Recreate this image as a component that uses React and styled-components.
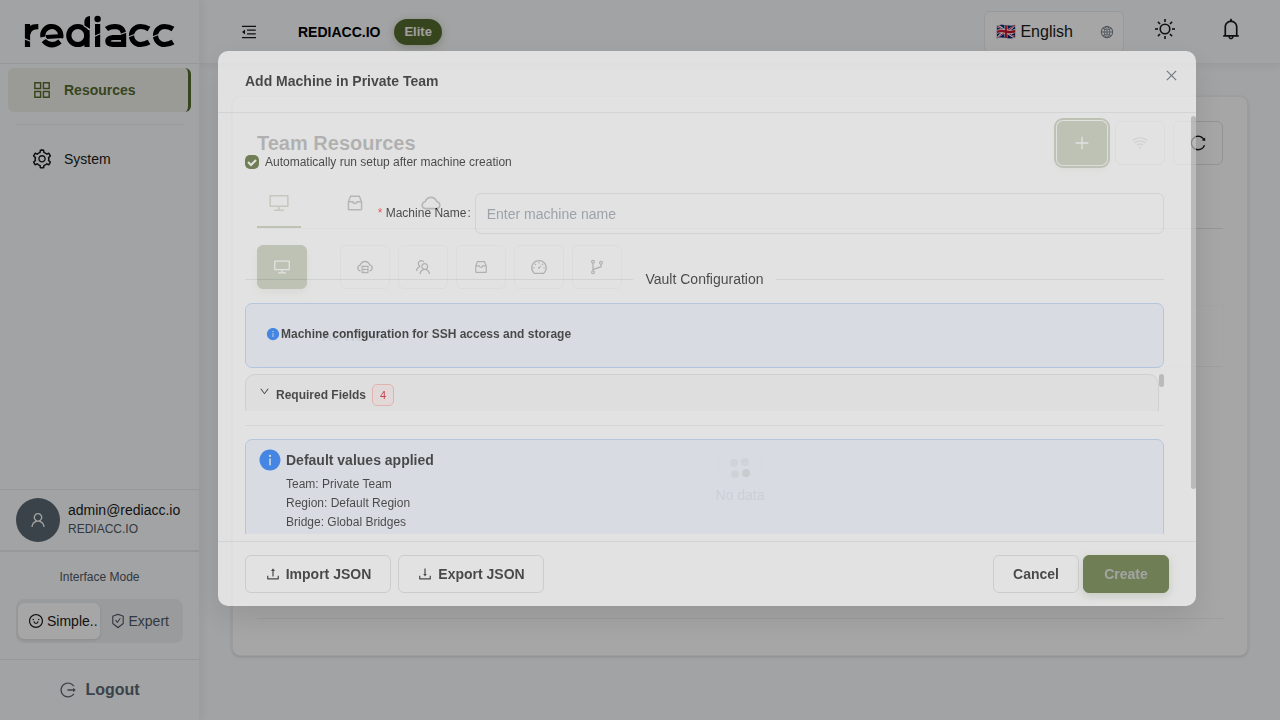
import React from 'react';
import styled, { createGlobalStyle, css } from 'styled-components';
import {
  AiOutlineAppstore, AiOutlineSetting, AiOutlineUser, AiOutlineSmile, AiOutlineSafetyCertificate,
  AiOutlineLogout, AiOutlineMenuFold, AiOutlineInbox, AiOutlineCloud, AiOutlineDesktop,
  AiOutlineCloudServer, AiOutlineTeam, AiOutlineDashboard, AiOutlineBranches, AiOutlineWifi,
  AiOutlineReload, AiOutlinePlus, AiOutlineUpload, AiOutlineDownload, AiOutlineDown,
  AiFillInfoCircle, AiOutlineClose, AiOutlineBell, AiOutlineGlobal,
} from 'react-icons/ai';

const Global = createGlobalStyle`
  *, *::before, *::after { box-sizing: border-box; }
  body {
    margin: 0;
    overflow: hidden;
    font-family: "Liberation Sans", Arial, sans-serif;
    font-size: 14px;
    color: #1a1a1a;
    background: #f9fafc;
  }
  button, input, select { font: inherit; color: inherit; margin: 0; }
  button { cursor: pointer; }
  h1, h2, h3, p, ul { margin: 0; padding: 0; }
  svg { display: block; flex: none; }
`;

const Page = styled.div`
  display: flex;
  min-height: 100vh;
`;

/* Sidebar */
const Sidebar = styled.aside`
  display: flex;
  flex-direction: column;
  flex: none;
  width: 200px;
  border-right: 1px solid #f0f0f2;
  box-shadow: 2px 0 8px rgba(0, 0, 0, 0.06);
  background: #f9fafc;
  z-index: 1;
`;

const Brand = styled.div`
  height: 64px;
  padding: 13px 24px;
  border-bottom: 1px solid #e8eaec;
`;

const Menu = styled.nav`
  display: flex;
  flex-direction: column;
  padding: 4px 8px;
`;

const MenuLink = styled.a`
  display: flex;
  align-items: center;
  gap: 11px;
  height: 44px;
  padding-left: 23px;
  border-radius: 6px;
  color: #1a1a1a;
  text-decoration: none;
  ${(p) => p.$active && css`
    background: #edefe9;
    color: #556b2f;
    font-weight: 600;
    border-right: 3px solid #556b2f;
  `}
`;

const MenuDivider = styled.hr`
  width: 168px;
  margin: 12px 8px;
  border: 0;
  border-top: 1px solid #eceef0;
`;

const UserPanel = styled.div`
  display: flex;
  align-items: center;
  gap: 8px;
  height: 61px;
  margin-top: auto;
  padding: 0 16px 1px;
  border-top: 1px solid #e8eaec;
`;

const Avatar = styled.div`
  display: flex;
  align-items: center;
  justify-content: center;
  flex: none;
  width: 44px;
  height: 44px;
  border-radius: 50%;
  background: #5a6872;
  color: #fafafa;
`;

const UserName = styled.div`
  line-height: 18px;
`;

const UserOrg = styled.div`
  font-size: 12px;
  line-height: 20px;
  color: #4d5863;
`;

const ModePanel = styled.fieldset`
  display: flex;
  flex-direction: column;
  gap: 12px;
  min-width: 0;
  margin: 0;
  padding: 15px 16px 16px;
  border: 0;
  border-top: 2px solid #e8eaec;
`;

const ModeTitle = styled.div`
  font-size: 12px;
  line-height: 20px;
  text-align: center;
  color: #4d5863;
`;

const Segmented = styled.div`
  display: flex;
  height: 44px;
  padding: 4px 2px;
  border-radius: 8px;
  background: #eceef0;
`;

const Segment = styled.label`
  display: flex;
  align-items: center;
  flex: 1;
  gap: 3px;
  min-width: 0;
  padding-left: 10px;
  border-radius: 6px;
  color: #4d5863;
  white-space: nowrap;
  &:has(input:checked) {
    background: #ffffff;
    color: #1a1a1a;
    box-shadow: 0 1px 3px rgba(0, 0, 0, 0.1);
  }
`;

const HiddenRadio = styled.input`
  position: absolute;
  opacity: 0;
  pointer-events: none;
`;

const Logout = styled.button`
  display: flex;
  align-items: center;
  justify-content: center;
  gap: 8px;
  height: 61px;
  border: 0;
  border-top: 1px solid #e8eaec;
  background: none;
  color: #5a6872;
  font-size: 16px;
  font-weight: 600;
`;

/* Main area */
const Main = styled.div`
  display: flex;
  flex-direction: column;
  flex: 1;
  min-width: 0;
`;

const Header = styled.header`
  display: flex;
  align-items: center;
  height: 64px;
  padding: 0 37px 0 40px;
  border-bottom: 1px solid #f0f0f2;
  box-shadow: 0 2px 8px rgba(0, 0, 0, 0.06);
`;

const BareButton = styled.button`
  display: flex;
  padding: 0;
  border: 0;
  background: none;
`;

const OrgName = styled.strong`
  margin-left: 40px;
  color: #000000;
`;

const PlanTag = styled.span`
  margin-left: 14px;
  padding: 0 10px;
  border-radius: 13px;
  background: #556b2f;
  box-shadow: 0 2px 8px rgba(85, 107, 47, 0.3);
  color: #f5f5f5;
  font-size: 13px;
  font-weight: 600;
  line-height: 26px;
`;

const HeaderTools = styled.div`
  display: flex;
  align-items: center;
  gap: 30px;
  margin-left: auto;
`;

const HeaderIcons = styled.div`
  display: flex;
  align-items: center;
  gap: 43px;
  padding-bottom: 5px;
`;

const LanguageBox = styled.div`
  display: flex;
  align-items: center;
  justify-content: space-between;
  width: 140px;
  height: 42px;
  padding: 0 9px 0 11px;
  border: 1px solid #eaecee;
  border-radius: 6px;
  background: #ffffff;
  color: #7b8490;
`;

const LanguageSelect = styled.select`
  appearance: none;
  padding: 0;
  border: 0;
  background: none;
  color: #1a1a1a;
  font-size: 16px;
`;

const Content = styled.main`
  display: flex;
  flex-direction: column;
  padding: 32px;
`;

const Card = styled.section`
  display: flex;
  flex-direction: column;
  min-height: 560px;
  padding: 24px;
  border: 1px solid #f0f1f2;
  border-radius: 8px;
  background: #ffffff;
  box-shadow: 0 1px 3px rgba(0, 0, 0, 0.15);
`;

const CardHead = styled.div`
  display: flex;
  align-items: center;
  justify-content: space-between;
  height: 44px;
`;

const CardTitle = styled.h1`
  font-size: 20px;
  line-height: 28px;
  font-weight: 600;
`;

const ButtonRow = styled.div`
  display: flex;
  gap: 8px;
`;

const SquareButton = styled.button`
  display: flex;
  align-items: center;
  justify-content: center;
  width: 50px;
  height: 44px;
  padding: 0 0 1px;
  border: 1px solid #dfe2e6;
  border-radius: 6px;
  background: none;
  color: #1a1a1a;
  ${(p) => p.$primary && css`
    border-color: #556b2f;
    background: #556b2f;
    color: #ffffff;
    box-shadow: 0 4px 10px rgba(85, 107, 47, 0.25);
  `}
  ${(p) => p.$focused && css`
    outline: 2px solid #556b2f;
    outline-offset: 1px;
  `}
  ${(p) => p.$disabled && css`
    color: #b8b8b8;
  `}
`;

const TabBar = styled.div`
  display: flex;
  gap: 32px;
  height: 51px;
  margin-top: 13px;
  border-bottom: 1px solid #e2e5e8;
`;

const Tab = styled.button`
  display: flex;
  align-items: center;
  justify-content: center;
  width: 44px;
  padding: 1px 0 0;
  border: 0;
  border-bottom: 2px solid ${(p) => (p.$active ? '#556b2f' : 'transparent')};
  background: none;
  color: ${(p) => (p.$active ? '#7a8a55' : '#333333')};
`;

const ViewRow = styled.div`
  display: flex;
  gap: 8px;
  margin-top: 16px;
  & > :first-child { margin-right: 25px; }
`;

const TableHead = styled.div`
  margin-top: 16px;
  padding: 0 64px;
  border: 1px solid #fafafa;
  border-bottom-color: #f2f3f4;
  color: #c4c8cc;
  font-weight: 600;
  line-height: 60px;
`;

const Empty = styled.div`
  display: flex;
  flex-direction: column;
  align-items: center;
  gap: 9px;
  flex: 1;
  margin-bottom: 12px;
  padding-top: 74px;
  border-bottom: 1px solid #f0f1f2;
  color: #c8c8c8;
`;

/* Dialog */
const Mask = styled.div`
  position: fixed;
  inset: 0;
  z-index: 10;
  display: flex;
  align-items: flex-start;
  padding: 51px 84px 0 218px;
  background: rgba(0, 0, 0, 0.35);
`;

const Dialog = styled.div`
  display: flex;
  flex-direction: column;
  flex: 1;
  min-width: 0;
  border-radius: 10px;
  background: #ffffff;
  box-shadow: 0 12px 32px rgba(0, 0, 0, 0.16);
  opacity: 0.67;
`;

const DialogHead = styled.div`
  display: flex;
  justify-content: space-between;
  height: 62px;
  padding: 17px 17px 0 27px;
  border-bottom: 1px solid #e8eaec;
`;

const DialogTitle = styled.h2`
  font-size: 14px;
  line-height: 26px;
  font-weight: 600;
`;

const CloseButton = styled(BareButton)`
  align-self: flex-start;
  color: #5a6872;
`;

const DialogBody = styled.div`
  display: flex;
  gap: 27px;
  padding-left: 27px;
`;

const Form = styled.form`
  display: flex;
  flex-direction: column;
  flex: 1;
  min-width: 0;
  height: 421px;
  overflow: hidden;
  padding-top: 39px;
`;

const ScrollTrack = styled.div`
  width: 5px;
  padding-top: 3px;
`;

const ScrollThumb = styled.div`
  flex: none;
  width: 5px;
  height: ${(p) => p.$height}px;
  border-radius: 3px;
  background: #c4c4c4;
`;

const CheckLine = styled.label`
  display: flex;
  align-items: center;
  gap: 6px;
  height: 20px;
  margin-top: 3px;
  font-size: 12px;
`;

const CheckBox = styled.input`
  appearance: none;
  width: 14px;
  height: 14px;
  border-radius: 5px;
  background: #556b2f url("data:image/svg+xml,%3Csvg xmlns='http://www.w3.org/2000/svg' viewBox='0 0 14 14'%3E%3Cpath d='M3 7l3 3 5-5' fill='none' stroke='white' stroke-width='2'/%3E%3C/svg%3E");
`;

const Field = styled.div`
  display: grid;
  grid-template-columns: 1fr 3fr;
  align-items: center;
  height: 41px;
  margin-top: 24px;
`;

const FieldLabel = styled.label`
  padding: 0 4px 2px 0;
  font-size: 12px;
  text-align: right;
`;

const Required = styled.span`
  color: #ff3b30;
`;

const Colon = styled.span`
  margin-left: 1px;
`;

const TextInput = styled.input`
  width: 100%;
  height: 41px;
  padding: 0 11px;
  border: 1px solid #e4e7ea;
  border-radius: 6px;
  background: none;
  &::placeholder { color: #98a0ad; opacity: 1; }
`;

const SectionRule = styled.div`
  display: flex;
  align-items: center;
  gap: 12px;
  height: 24px;
  margin-top: 37px;
  &::before, &::after {
    content: "";
    flex: 1;
    height: 1px;
    background: #e4e7ea;
  }
`;

const Notice = styled.div`
  display: flex;
  align-items: center;
  gap: 1px;
  flex: none;
  height: 65px;
  margin-top: 16px;
  padding: 0 20px 3px;
  border: 1px solid #bcd4f8;
  border-radius: 7px;
  background: #f0f5ff;
  color: #1a1a1a;
  font-size: 12px;
  font-weight: 600;
  & > svg { color: #1677ff; }
`;

const FieldsPane = styled.div`
  display: flex;
  flex: none;
  height: 37px;
  margin-top: 6px;
  overflow: hidden;
`;

const PanelHead = styled.button`
  display: flex;
  align-items: center;
  gap: 6px;
  flex: 1;
  height: 50px;
  padding: 0 13px 9px;
  border: 1px solid #e0e3e6;
  border-radius: 10px 10px 0 0;
  background: #f9f9f9;
  font-size: 12px;
  font-weight: 600;
`;

const Chevron = styled.span`
  padding-bottom: 6px;
`;

const CountTag = styled.span`
  width: 22px;
  border: 1px solid #ffb8b4;
  border-radius: 5px;
  background: #fff1f0;
  color: #cf1322;
  font-size: 11px;
  font-weight: 400;
  line-height: 20px;
  text-align: center;
`;

const Rule = styled.hr`
  flex: none;
  width: 100%;
  height: 1px;
  margin: 14px 0 13px;
  border: 0;
  background: #eceef0;
`;

const Defaults = styled.div`
  display: flex;
  gap: 4px;
  flex: none;
  height: 120px;
  padding: 8px 12px;
  border: 1px solid #bcd4f8;
  border-radius: 7px;
  background: #f0f5ff;
  & > svg { color: #1677ff; }
`;

const DefaultsTitle = styled.h3`
  margin-bottom: 2px;
  font-size: 14px;
  line-height: 25px;
  font-weight: 600;
`;

const DefaultLine = styled.p`
  font-size: 12px;
  line-height: 19px;
`;

const DialogFoot = styled.div`
  display: flex;
  align-items: flex-start;
  justify-content: space-between;
  height: 65px;
  margin-top: 7px;
  padding: 13px 27px;
  border-top: 1px solid #e8eaec;
`;

const FootGroup = styled.div`
  display: flex;
  gap: ${(p) => p.$gap}px;
`;

const ActionButton = styled.button`
  display: flex;
  align-items: center;
  justify-content: center;
  gap: 5px;
  width: ${(p) => (p.$wide ? 146 : 86)}px;
  height: 38px;
  padding: 0 0 1px;
  border: 1px solid #dcdfe1;
  border-radius: 6px;
  background: none;
  font-weight: 600;
  ${(p) => p.$primary && css`
    border-color: #556b2f;
    background: #556b2f;
    color: #a0a4a0;
    box-shadow: 0 3px 8px rgba(85, 107, 47, 0.25);
  `}
`;

function Logo() {
  return (
    <svg width="152" height="36" viewBox="24 13 152 36" role="img" aria-label="rediacc">
      <g fill="none" stroke="#000" strokeWidth="5.2">
        <path d="M27.5 47 V24" />
        <path d="M28 34 Q28.5 26.6 38.3 26.6" />
        <circle cx="51.8" cy="35.5" r="9" strokeDasharray="32 24.6" transform="rotate(170 51.8 35.5)" />
        <path d="M46 37 L63.2 36" strokeWidth="4" />
        <path d="M43.6 40.5 Q51 48.5 60 41.5" />
        <circle cx="77.8" cy="35.5" r="9" />
        <path d="M87 47 V30" />
        <path d="M97.6 24 V47" />
        <path d="M106.5 29 Q110 26.5 115 26.5 Q123.6 26.8 123.6 35 V47" />
        <path d="M123.6 37.5 H113 Q107.8 38 107.8 41.2 Q108 44.4 113 44.4 H123.6" />
        <path d="M149 29 Q145 26.5 140.5 26.5 A9 9 0 0 0 140.5 44.5 Q145 44.5 149 42" />
        <path d="M173 29 Q169 26.5 164.5 26.5 A9 9 0 0 0 164.5 44.5 Q169 44.5 173 42" />
      </g>
      <path d="M90 16 V29 L84.4 26 V21 Q85 16.5 90 16Z" />
      <circle cx="97.6" cy="19" r="3.2" />
      <g stroke="#f9fafc" strokeWidth="1.2">
        <line x1="24" y1="38.5" x2="31" y2="41.5" />
        <line x1="40" y1="40" x2="47" y2="38.5" />
        <line x1="83.5" y1="25.5" x2="91" y2="30.5" />
        <line x1="94" y1="36.5" x2="101" y2="33.5" />
        <line x1="120" y1="34.5" x2="127" y2="32" />
        <line x1="128" y1="37" x2="136" y2="34" />
        <line x1="152" y1="37" x2="160" y2="34" />
      </g>
    </svg>
  );
}

function SunIcon() {
  const rays = [0, 45, 90, 135, 180, 225, 270, 315];
  return (
    <svg width="22" height="22" viewBox="0 0 22 22" fill="none" stroke="#1a1a1a" strokeWidth="1.6" aria-hidden="true">
      <circle cx="11" cy="11" r="4.8" />
      {rays.map((a) => (
        <line key={a} x1="11" y1="1" x2="11" y2="4" transform={`rotate(${a} 11 11)`} />
      ))}
    </svg>
  );
}

function LoadingDots() {
  return (
    <svg width="46" height="37" viewBox="0 0 46 37" aria-hidden="true">
      <path d="M1 34V14L10 2H36L45 14V34ZM1 14H13Q15 20 19 20H28Q31 20 33 14H45" fill="none" stroke="#f2f2f2" />
      <g fill="#556b2f">
        <circle cx="17" cy="22" r="4" opacity="0.22" />
        <circle cx="28" cy="21" r="4" opacity="0.22" />
        <circle cx="18" cy="33" r="4" opacity="0.25" />
        <circle cx="29" cy="32" r="4" opacity="0.45" />
      </g>
    </svg>
  );
}

const views = [
  ['Bridges', AiOutlineCloudServer, 18], ['Teams', AiOutlineTeam, 18], ['Repositories', AiOutlineInbox, 16],
  ['Usage', AiOutlineDashboard, 18], ['Branches', AiOutlineBranches, 18],
];

export default function App() {
  return (
    <>
      <Global />
      <Page>
        <Sidebar>
          <Brand><Logo /></Brand>
          <Menu>
            <MenuLink href="#resources" $active><AiOutlineAppstore size={22} />Resources</MenuLink>
            <MenuDivider />
            <MenuLink href="#system"><AiOutlineSetting size={22} />System</MenuLink>
          </Menu>
          <UserPanel>
            <Avatar><AiOutlineUser size={18} /></Avatar>
            <div>
              <UserName>admin@rediacc.io</UserName>
              <UserOrg>REDIACC.IO</UserOrg>
            </div>
          </UserPanel>
          <ModePanel>
            <ModeTitle>Interface Mode</ModeTitle>
            <Segmented>
              <Segment><HiddenRadio type="radio" name="mode" defaultChecked /><AiOutlineSmile size={16} />Simple..</Segment>
              <Segment><HiddenRadio type="radio" name="mode" /><AiOutlineSafetyCertificate size={16} />Expert</Segment>
            </Segmented>
          </ModePanel>
          <Logout type="button"><AiOutlineLogout size={18} />Logout</Logout>
        </Sidebar>
        <Main>
          <Header>
            <BareButton type="button" aria-label="Collapse menu"><AiOutlineMenuFold size={18} /></BareButton>
            <OrgName>REDIACC.IO</OrgName>
            <PlanTag>Elite</PlanTag>
            <HeaderTools>
              <LanguageBox>
                <LanguageSelect aria-label="Language"><option>🇬🇧 English</option></LanguageSelect>
                <AiOutlineGlobal size={14} />
              </LanguageBox>
              <HeaderIcons>
                <BareButton type="button" aria-label="Light theme"><SunIcon /></BareButton>
                <BareButton type="button" aria-label="Notifications"><AiOutlineBell size={24} /></BareButton>
              </HeaderIcons>
            </HeaderTools>
          </Header>
          <Content>
            <Card>
              <CardHead>
                <CardTitle>Team Resources</CardTitle>
                <ButtonRow>
                  <SquareButton type="button" aria-label="Add" $primary $focused><AiOutlinePlus size={18} /></SquareButton>
                  <SquareButton type="button" aria-label="Test connection" $disabled><AiOutlineWifi size={18} /></SquareButton>
                  <SquareButton type="button" aria-label="Reload"><AiOutlineReload size={18} /></SquareButton>
                </ButtonRow>
              </CardHead>
              <TabBar>
                <Tab type="button" aria-label="Machines" $active><AiOutlineDesktop size={22} /></Tab>
                <Tab type="button" aria-label="Repositories"><AiOutlineInbox size={20} /></Tab>
                <Tab type="button" aria-label="Cloud"><AiOutlineCloud size={22} /></Tab>
              </TabBar>
              <ViewRow>
                <SquareButton type="button" aria-label="Machine list" $primary><AiOutlineDesktop size={18} /></SquareButton>
                {views.map(([label, Icon, size]) => (
                  <SquareButton key={label} type="button" aria-label={label}><Icon size={size} /></SquareButton>
                ))}
              </ViewRow>
              <TableHead>ACTIONS</TableHead>
              <Empty><LoadingDots />No data</Empty>
            </Card>
          </Content>
        </Main>
      </Page>
      <Mask>
        <Dialog role="dialog" aria-label="Add Machine in Private Team">
          <DialogHead>
            <DialogTitle>Add Machine in Private Team</DialogTitle>
            <CloseButton type="button" aria-label="Close"><AiOutlineClose size={15} /></CloseButton>
          </DialogHead>
          <DialogBody>
            <Form id="machine">
              <CheckLine><CheckBox type="checkbox" defaultChecked />Automatically run setup after machine creation</CheckLine>
              <Field>
                <FieldLabel htmlFor="name"><Required>*</Required> Machine Name<Colon>:</Colon></FieldLabel>
                <TextInput id="name" placeholder="Enter machine name" />
              </Field>
              <SectionRule>Vault Configuration</SectionRule>
              <Notice><AiFillInfoCircle size={14} />Machine configuration for SSH access and storage</Notice>
              <FieldsPane>
                <PanelHead type="button"><Chevron><AiOutlineDown size={11} /></Chevron>Required Fields<CountTag>4</CountTag></PanelHead>
                <ScrollThumb $height={13} />
              </FieldsPane>
              <Rule />
              <Defaults>
                <AiFillInfoCircle size={24} />
                <div>
                  <DefaultsTitle>Default values applied</DefaultsTitle>
                  <DefaultLine>Team: Private Team</DefaultLine>
                  <DefaultLine>Region: Default Region</DefaultLine>
                  <DefaultLine>Bridge: Global Bridges</DefaultLine>
                </div>
              </Defaults>
            </Form>
            <ScrollTrack><ScrollThumb $height={373} /></ScrollTrack>
          </DialogBody>
          <DialogFoot>
            <FootGroup $gap={7}>
              <ActionButton type="button" $wide><AiOutlineUpload size={16} />Import JSON</ActionButton>
              <ActionButton type="button" $wide><AiOutlineDownload size={16} />Export JSON</ActionButton>
            </FootGroup>
            <FootGroup $gap={4}>
              <ActionButton type="button">Cancel</ActionButton>
              <ActionButton type="submit" form="machine" $primary>Create</ActionButton>
            </FootGroup>
          </DialogFoot>
        </Dialog>
      </Mask>
    </>
  );
}
